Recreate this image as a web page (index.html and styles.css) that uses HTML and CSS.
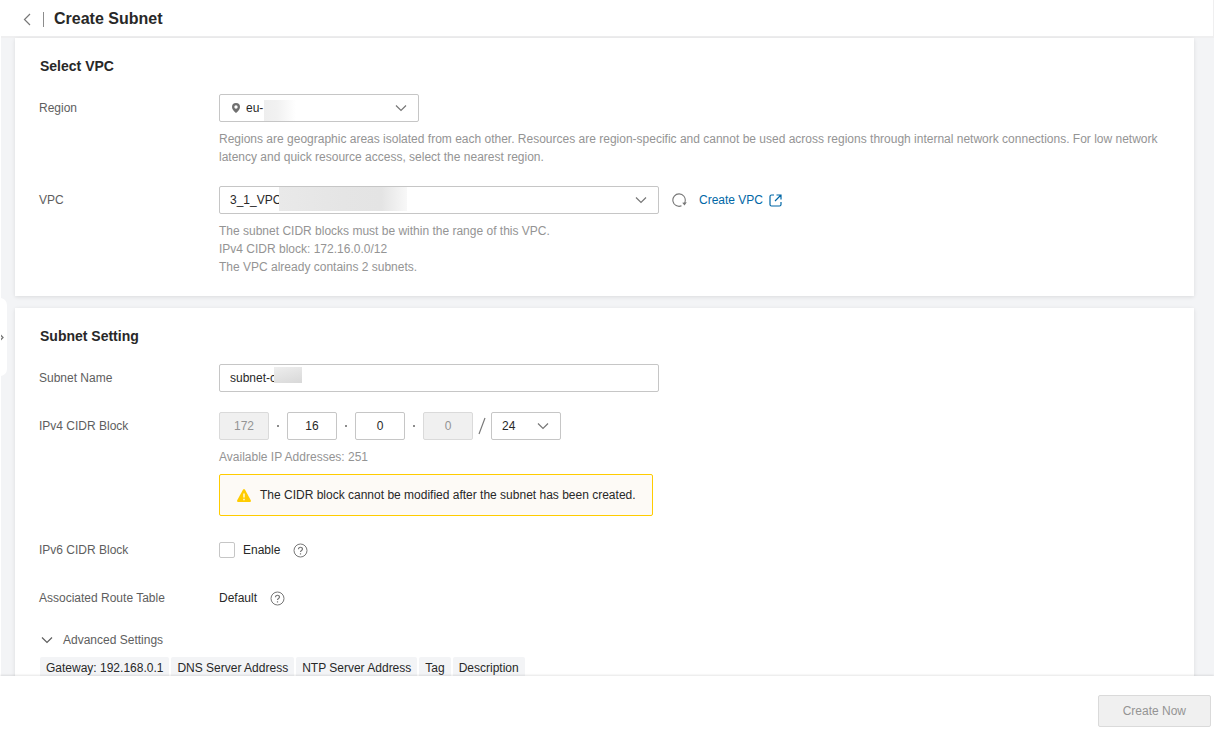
FILE: index.html
```html
<!DOCTYPE html>
<html lang="en">
<head>
<meta charset="utf-8">
<title>Create Subnet</title>
<link rel="stylesheet" href="styles.css">
</head>
<body>
<header class="topbar">
  <a class="back" href="#" aria-label="Back"><svg width="8" height="13" viewBox="0 0 8 13"><path d="M7 1 1.5 6.5 7 12" fill="none" stroke="currentColor" stroke-width="1.2"/></svg></a>
  <span class="divider"></span>
  <h1>Create Subnet</h1>
</header>

<main class="page">
  <button class="handle" type="button" aria-label="Expand menu"><svg width="4" height="7" viewBox="0 0 4 7"><path d="M.5 1 3 3.5.5 6" fill="none" stroke="currentColor" stroke-width="1.3"/></svg></button>

  <section class="card">
    <h2>Select VPC</h2>
    <div class="row">
      <label class="name" for="region">Region</label>
      <div class="field">
        <div class="select region">
          <svg class="pin" width="8" height="10" viewBox="0 0 8 10"><path fill="currentColor" fill-rule="evenodd" d="M4 0a4 4 0 0 1 4 4c0 2.300-2 4.200-4 6C2 8.200 0 6.300 0 4a4 4 0 0 1 4-4Zm0 2.300a1.700 1.700 0 1 0 0 3.400 1.700 1.700 0 0 0 0-3.400Z"/></svg>
          <select id="region"><option>eu-</option></select>
          <span class="mask mask-region"></span>
          <svg class="chevron" width="12" height="8" viewBox="0 0 12 8"><path d="m1 1.500 5 5 5-5" fill="none" stroke="currentColor" stroke-width="1.200"/></svg>
        </div>
        <p class="hint">Regions are geographic areas isolated from each other. Resources are region-specific and cannot be used across regions through internal network connections. For low network latency and quick resource access, select the nearest region.</p>
      </div>
    </div>
    <div class="row">
      <label class="name" for="vpc">VPC</label>
      <div class="field">
        <div class="inline">
          <div class="select wide">
            <select id="vpc"><option>3_1_VPC</option></select>
            <span class="mask mask-vpc"></span>
            <svg class="chevron" width="12" height="8" viewBox="0 0 12 8"><path d="m1 1.500 5 5 5-5" fill="none" stroke="currentColor" stroke-width="1.200"/></svg>
          </div>
          <button class="refresh" type="button" aria-label="Refresh"><svg width="15" height="14" viewBox="0 0 15 14"><path d="M9.500 12.800A6.200 6.200 0 1 1 13.100 8.500L12.700 10.500" fill="none" stroke="currentColor" stroke-width="1.100"/><path d="M10.200 9.800 14.800 9.300 12.500 12.500Z" fill="currentColor"/></svg></button>
          <a class="link" href="#">Create VPC <svg width="13" height="13" viewBox="0 0 13 13"><path d="M5 1H2.500Q1 1 1 2.500v8Q1 12 2.500 12h8q1.500 0 1.500-1.500V8M7.500 1H12v4.500M12 1 6 7" fill="none" stroke="currentColor" stroke-width="1.200"/></svg></a>
        </div>
        <p class="hint">The subnet CIDR blocks must be within the range of this VPC.<br>IPv4 CIDR block: 172.16.0.0/12<br>The VPC already contains 2 subnets.</p>
      </div>
    </div>
  </section>

  <section class="card">
    <h2>Subnet Setting</h2>
    <div class="row">
      <label class="name" for="subnet">Subnet Name</label>
      <div class="field">
        <div class="textbox wide"><input id="subnet" type="text" value="subnet-c"><span class="mask mask-subnet"></span></div>
      </div>
    </div>
    <div class="row">
      <label class="name" for="octet2">IPv4 CIDR Block</label>
      <div class="field">
        <div class="cidr">
          <input type="text" value="172" aria-label="First octet" disabled>
          <span class="dot"></span>
          <input id="octet2" type="text" value="16">
          <span class="dot"></span>
          <input type="text" value="0" aria-label="Third octet">
          <span class="dot"></span>
          <input type="text" value="0" aria-label="Fourth octet" disabled>
          <svg class="slash" width="8" height="18" viewBox="0 0 8 18"><path d="M7 1 1 17" stroke="currentColor" stroke-width="1.200"/></svg>
          <div class="select prefix">
            <select aria-label="Prefix length"><option>24</option></select>
            <svg class="chevron" width="12" height="8" viewBox="0 0 12 8"><path d="m1 1.500 5 5 5-5" fill="none" stroke="currentColor" stroke-width="1.200"/></svg>
          </div>
        </div>
        <p class="hint">Available IP Addresses: 251</p>
        <div class="alert">
          <svg width="14" height="13" viewBox="0 0 14 13"><path d="M6.100.6q.9-1.200 1.800 0l5.900 10.700q.5 1.500-.8 1.700H1Q-.300 12.800.2 11.300Z" fill="#fc0"/><path d="M7 4.500v4M7 9.800v1.400" stroke="#fff" stroke-width="1.300"/></svg>
          <span>The CIDR block cannot be modified after the subnet has been created.</span>
        </div>
      </div>
    </div>
    <div class="row">
      <span class="name">IPv6 CIDR Block</span>
      <div class="field inline">
        <label class="check"><input type="checkbox">Enable</label>
        <button class="help" type="button" aria-label="About IPv6"><svg width="15" height="15" viewBox="0 0 15 15"><g fill="none" stroke="currentColor"><circle cx="7.500" cy="7.500" r="6.500"/><path d="M5.500 6.200C5.500 3.600 9.500 3.700 9.500 6c0 1.400-2 1.500-2 3M7.500 10.200v1.200" stroke-width="1.200"/></g></svg></button>
      </div>
    </div>
    <div class="row">
      <span class="name">Associated Route Table</span>
      <div class="field inline">
        <span>Default</span>
        <button class="help" type="button" aria-label="About route tables"><svg width="15" height="15" viewBox="0 0 15 15"><g fill="none" stroke="currentColor"><circle cx="7.500" cy="7.500" r="6.500"/><path d="M5.500 6.200C5.500 3.600 9.500 3.700 9.500 6c0 1.400-2 1.500-2 3M7.500 10.200v1.200" stroke-width="1.200"/></g></svg></button>
      </div>
    </div>
    <button class="advanced" type="button"><svg width="12" height="8" viewBox="0 0 12 8"><path d="m1 1.500 5 5 5-5" fill="none" stroke="currentColor" stroke-width="1.200"/></svg>Advanced Settings</button>
    <div class="tags">
      <span>Gateway: 192.168.0.1</span><span>DNS Server Address</span><span>NTP Server Address</span><span>Tag</span><span>Description</span>
    </div>
  </section>
</main>

<footer class="actions">
  <button class="create" type="button" disabled>Create Now</button>
</footer>
</body>
</html>
```
FILE: styles.css
```css
* { box-sizing: border-box; }
body {
  margin: 0;
  height: 100vh;
  display: flex;
  flex-direction: column;
  background: #fff;
  color: #282828;
  font: 12px/18px "Liberation Sans", Arial, sans-serif;
}
h1, h2, p { margin: 0; }
button, input, select { font: inherit; color: inherit; }
button { padding: 0; border: 0; background: none; }
svg { display: block; flex: none; }

.topbar {
  flex: none;
  display: flex;
  align-items: center;
  height: 36px;
  padding: 2px 23px 0;
  border-right: 1px solid #efeff0;
}
.back { color: #777; }
.divider { width: 1px; height: 15px; margin: 0 10px 0 12px; background: #8c8c8c; }
h1 { font-size: 16px; line-height: 20px; }
h2 { margin-bottom: 18px; padding-left: 1px; font-size: 14px; line-height: 20px; }

.page {
  position: relative;
  flex: 1;
  min-height: 0;
  overflow: hidden;
  padding: 2px 20px 0 14px;
  background: #f3f4f6;
  border-left: 1px solid #fff;
  box-shadow: inset 0 2px 0 #efeff0;
}
.handle {
  position: absolute;
  left: -1px;
  top: 262px;
  display: flex;
  align-items: center;
  width: 7px;
  height: 78px;
  background: #fff;
  border-radius: 0 7px 7px 0;
  color: #777;
}
.card {
  margin-bottom: 12px;
  padding: 18px 24px 20px;
  background: #fff;
  box-shadow: 0 1px 4px rgba(0, 0, 0, .1);
}
.row { display: flex; margin-bottom: 20px; }
.row:last-child { margin-bottom: 0; }
.name { flex: none; width: 180px; line-height: 28px; color: #5e5e5e; }
.field { flex: 1; min-width: 0; }
.inline { display: flex; align-items: center; }
.hint { margin-top: 8px; color: #949494; }

.select, .textbox { position: relative; display: flex; align-items: center; }
.select select, .textbox input, .cidr input {
  width: 100%;
  height: 28px;
  padding: 0 10px;
  border: 1px solid #c6c6c6;
  border-radius: 2px;
  background: #fff;
  appearance: none;
}
.region { width: 200px; }
.region select { padding-left: 26px; }
.wide { width: 440px; }
.prefix { width: 70px; }
.chevron { position: absolute; right: 12px; color: #777; pointer-events: none; }
.pin { position: absolute; left: 13px; color: #707070; }
.mask { position: absolute; }
.mask-region { left: 45px; top: 6px; width: 32px; height: 21px; background: linear-gradient(90deg, #eee, #f1f1f1 40%, #fff); }
.mask-vpc { left: 60px; top: 1px; width: 128px; height: 24px; background: linear-gradient(90deg, #e9e9e9, #e5e5e5 50%, #e4e4e4 80%, #f8f8f8); }
.mask-subnet { left: 55px; top: 3px; width: 28px; height: 16px; background: linear-gradient(165deg, #eee, #d8d8d8); }

.refresh { margin: 0 12px 0 13px; color: #777; }
.link { display: flex; align-items: center; gap: 6px; color: #0067a6; text-decoration: none; }

.cidr { display: flex; align-items: center; }
.cidr input { width: 50px; text-align: center; }
.cidr input:disabled { background: #f0f0f0; border-color: #dadada; color: #949494; }
.dot { width: 2px; height: 2px; margin: 0 8px; background: #8c8c8c; }
.slash { margin: 0 5px; color: #777; }

.alert {
  display: flex;
  align-items: center;
  gap: 9px;
  width: fit-content;
  height: 42px;
  margin-top: 8px;
  padding: 0 16px 0 17px;
  border: 1px solid #fc0;
  border-radius: 2px;
  background: #fdfaf6;
}
.check { display: flex; align-items: center; gap: 8px; }
.check input {
  width: 16px;
  height: 16px;
  margin: 0;
  border: 1px solid #c6c6c6;
  border-radius: 2px;
  appearance: none;
}
.help { margin-left: 13px; color: #777; }

.advanced { display: flex; align-items: center; gap: 10px; padding-left: 2px; line-height: 16px; color: #5e5e5e; }
.tags { display: flex; gap: 2px; margin-top: 9px; padding-left: 1px; }
.tags span { padding: 0 6px; line-height: 22px; background: #f3f4f6; border-radius: 2px; }

.actions {
  position: relative;
  flex: none;
  display: flex;
  justify-content: flex-end;
  padding: 19px 3px 10px;
  background: #fff;
  box-shadow: 0 -1px 2px rgba(0, 0, 0, .1);
}
.create {
  height: 32px;
  padding: 0 24px;
  border: 1px solid #dadada;
  border-radius: 2px;
  background: #f0f0f0;
  color: #949494;
}
```
